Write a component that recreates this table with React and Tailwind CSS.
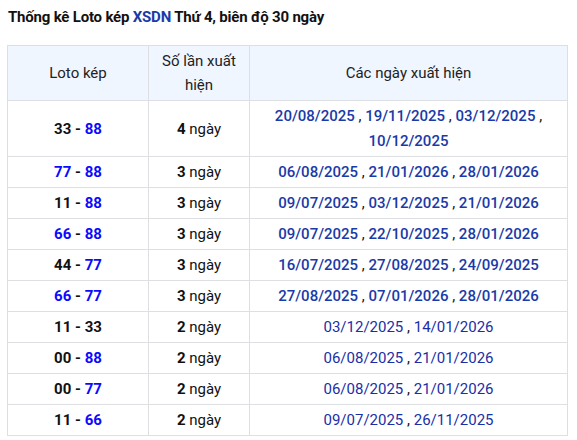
import React from 'react';

const rows = [
  { a: '33', aBlue: false, b: '88', bBlue: true, n: 4, dates: ['20/08/2025', '19/11/2025', '03/12/2025', '10/12/2025'] },
  { a: '77', aBlue: true, b: '88', bBlue: true, n: 3, dates: ['06/08/2025', '21/01/2026', '28/01/2026'] },
  { a: '11', aBlue: false, b: '88', bBlue: true, n: 3, dates: ['09/07/2025', '03/12/2025', '21/01/2026'] },
  { a: '66', aBlue: true, b: '88', bBlue: true, n: 3, dates: ['09/07/2025', '22/10/2025', '28/01/2026'] },
  { a: '44', aBlue: false, b: '77', bBlue: true, n: 3, dates: ['16/07/2025', '27/08/2025', '24/09/2025'] },
  { a: '66', aBlue: true, b: '77', bBlue: true, n: 3, dates: ['27/08/2025', '07/01/2026', '28/01/2026'] },
  { a: '11', aBlue: false, b: '33', bBlue: false, n: 2, dates: ['03/12/2025', '14/01/2026'] },
  { a: '00', aBlue: false, b: '88', bBlue: true, n: 2, dates: ['06/08/2025', '21/01/2026'] },
  { a: '00', aBlue: false, b: '77', bBlue: true, n: 2, dates: ['06/08/2025', '21/01/2026'] },
  { a: '11', aBlue: false, b: '66', bBlue: true, n: 2, dates: ['09/07/2025', '26/11/2025'] },
];

export default function App() {
  return (
    <div className="bg-white px-[7px] pt-[7px] text-[15px] text-[#111] font-['Roboto',sans-serif]">
      <h3 className="pl-px text-[15px] font-bold leading-[20px] tracking-[-0.2px] text-[#111]">
        Thống kê Loto kép <span className="text-[#1a3aa8]">XSDN</span> Thứ 4, biên độ 30 ngày
      </h3>

      <table className="mt-[18px] w-[560px] table-fixed border-collapse">
        <colgroup>
          <col className="w-[141px]" />
          <col className="w-[101px]" />
          <col className="w-[318px]" />
        </colgroup>
        <thead>
          <tr className="bg-[#eff6ff]">
            <th className="border border-[#dedfe3] px-2 py-[3px] text-[15px] font-normal leading-[24px] text-[#222]">Loto kép</th>
            <th className="border border-[#dedfe3] px-2 py-[3px] text-[15px] font-normal leading-[24px] text-[#222]">Số lần xuất hiện</th>
            <th className="border border-[#dedfe3] px-2 py-[3px] text-[15px] font-normal leading-[24px] text-[#222]">Các ngày xuất hiện</th>
          </tr>
        </thead>
        <tbody>
          {rows.map((r, i) => (
            <tr key={i}>
              <td className="border border-[#dedfe3] px-2 py-[3px] text-center font-bold leading-[24px]">
                <span className={r.aBlue ? 'text-[#0a0aff]' : 'text-[#111]'}>{r.a}</span>
                {' - '}
                <span className={r.bBlue ? 'text-[#0a0aff]' : 'text-[#111]'}>{r.b}</span>
              </td>
              <td className="border border-[#dedfe3] px-2 py-[3px] text-center leading-[24px]">
                <span className="font-bold">{r.n}</span> ngày
              </td>
              <td className="border border-[#dedfe3] px-2 py-[2.5px] text-center leading-[25px]">
                {r.dates.map((d, j) => (
                  <React.Fragment key={j}>
                    <span className={r.n > 2 ? 'font-medium text-[#1a3aa8]' : 'font-normal text-[#1a2fa6]'}>{d}</span>
                    {j < r.dates.length - 1 ? ' , ' : ''}
                  </React.Fragment>
                ))}
              </td>
            </tr>
          ))}
        </tbody>
      </table>
    </div>
  );
}
